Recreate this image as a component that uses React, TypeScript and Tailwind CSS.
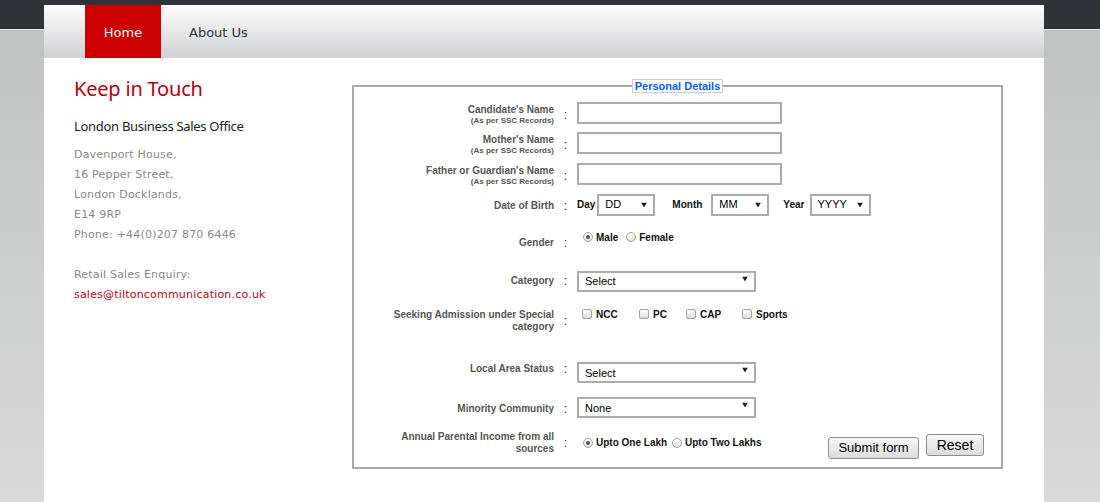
import React from 'react';

const arial = { fontFamily: '"Liberation Sans", Arial, sans-serif' };

const Radio: React.FC<{ checked?: boolean }> = ({ checked }) => (
  <span className="w-[10px] h-[10px] rounded-full border border-[#a3a3a3] bg-gradient-to-b from-[#ffffff] to-[#dedede] flex items-center justify-center shrink-0">
    {checked && <span className="w-[4px] h-[4px] rounded-full bg-[#555]"></span>}
  </span>
);

const Check: React.FC = () => (
  <span className="w-[10px] h-[10px] rounded-[2px] border border-[#a3a3a3] bg-gradient-to-b from-[#ffffff] to-[#dedede] shrink-0"></span>
);

const Select: React.FC<{ value: string; width: string; height?: string }> = ({ value, width, height = 'h-[22px]' }) => (
  <div className={`relative ${width} ${height}`}>
    <select
      defaultValue={value}
      className="appearance-none w-full h-full border-2 border-[#acacac] bg-white pl-[6px] text-[11px] font-normal text-black outline-none"
      style={arial}
    >
      <option>{value}</option>
    </select>
    <svg className="absolute right-[8px] top-1/2 -translate-y-1/2 pointer-events-none" width="6" height="5" viewBox="0 0 6 5">
      <path d="M0 0 H6 L3 5 Z" fill="#222" />
    </svg>
  </div>
);

// shift = a top-[Npx] class nudging the label and colon to sit where the original table cell puts them
const Row: React.FC<{ label: string; sub?: string; label2?: string; h: string; shift: string; children?: React.ReactNode }> = ({ label, sub, label2, h, shift, children }) => (
  <div className={`flex items-center ${h}`}>
    <div className={`relative ${shift} flex items-center shrink-0`}>
      <div className="w-[200px] text-right">
        <div className="text-[10px] font-bold text-[#555] leading-[12px]">{label}</div>
        {label2 && <div className="text-[10px] font-bold text-[#555] leading-[12px]">{label2}</div>}
        {sub && <div className="text-[8px] font-bold text-[#555] leading-[10px]">{sub}</div>}
      </div>
      <div className="w-[23px] text-center text-[12px] text-[#222]">:</div>
    </div>
    {children}
  </div>
);

const TextBox: React.FC = () => (
  <input type="text" className="w-[205px] h-[22px] border-2 border-[#acacac] bg-white outline-none" />
);

export default function App() {
  return (
    <div
      className="min-h-[502px] bg-[linear-gradient(to_bottom,#2f3337_0px,#2f3337_29px,#e8e8e8_29px,#e8e8e8_30px,#c1c3c3_30px,#d9d9d9_100%)]"
      style={arial}
    >
      <div className="ml-[44px] w-[1000px] pt-[5px]">
        {/* nav */}
        <nav className="h-[53px] flex bg-gradient-to-b from-[#fdfdfd] to-[#d0d1d3]" style={{ fontFamily: '"DejaVu Sans", Verdana, sans-serif' }}>
          <a className="ml-[41px] w-[76px] pt-[2px] bg-[#cc0000] text-white text-[13px] flex items-center justify-center">Home</a>
          <a className="ml-[28px] pt-[2px] text-[#2d3540] text-[13px] flex items-center">About Us</a>
        </nav>

        <div className="h-[444px] bg-white flex">
          {/* contact column */}
          <div className="w-[308px] pl-[30px] pt-[18px] shrink-0">
            <h2 className="text-[20px] leading-[26px] text-[#b5000f] tracking-[-0.2px]" style={{ fontFamily: '"Noto Sans", "Open Sans", sans-serif' }}>
              Keep in Touch
            </h2>
            <p className="mt-[14px] text-[13px] leading-[20px] text-[#222] tracking-[-0.3px]" style={{ fontFamily: '"Noto Sans", "Open Sans", sans-serif' }}>
              London Business Sales Office
            </p>
            <div className="mt-[9px] text-[11px] leading-[20px] text-[#888] tracking-[0.2px]" style={{ fontFamily: '"DejaVu Sans", Verdana, sans-serif' }}>
              <div>Davenport House,</div>
              <div>16 Pepper Street,</div>
              <div>London Docklands,</div>
              <div>E14 9RP</div>
              <div>Phone: +44(0)207 870 6446</div>
              <div className="h-[20px]"></div>
              <div>Retail Sales Enquiry:</div>
              <div className="text-[#c00010]">sales@tiltoncommunication.co.uk</div>
            </div>
          </div>

          {/* form */}
          <fieldset className="mt-[21px] w-[651px] h-[390px] border-2 border-[#a8a8a8] pt-[4px] self-start">
            <legend className="mx-auto px-[2px] border border-[#cfcfcf] text-[11px] leading-[12px] font-bold text-[#0b5cff]">
              Personal Details
            </legend>

            <Row label="Candidate's Name" sub="(As per SSC Records)" h="h-[31px]" shift="top-[2px]">
              <TextBox />
            </Row>
            <Row label="Mother's Name" sub="(As per SSC Records)" h="h-[30px]" shift="top-[2px]">
              <TextBox />
            </Row>
            <Row label="Father or Guardian's Name" sub="(As per SSC Records)" h="h-[31px]" shift="top-[2px]">
              <TextBox />
            </Row>
            <Row label="Date of Birth" h="h-[31px]" shift="top-[1px]">
              <div className="flex items-center text-[10px] font-bold text-[#111]">
                <span>Day</span>
                <div className="ml-[2px]"><Select value="DD" width="w-[58px]" /></div>
                <span className="ml-[17px]">Month</span>
                <div className="ml-[9px]"><Select value="MM" width="w-[58px]" /></div>
                <span className="ml-[14px]">Year</span>
                <div className="ml-[5px]"><Select value="YYYY" width="w-[61px]" /></div>
              </div>
            </Row>
            <Row label="Gender" h="h-[38px]" shift="top-[4px]">
              <div className="flex items-center mb-[4px] text-[10px] font-bold text-[#111]">
                <span className="ml-[6px]"><Radio checked /></span>
                <span className="ml-[3px]">Male</span>
                <span className="ml-[8px]"><Radio /></span>
                <span className="ml-[3px]">Female</span>
              </div>
            </Row>
            <Row label="Category" h="h-[41px]" shift="top-[2px]">
              <Select value="Select" width="w-[179px]" height="h-[21px]" />
            </Row>
            <Row label="Seeking Admission under Special" label2="category" h="h-[38px]" shift="top-[3px]">
              <div className="flex items-center mb-[8px] ml-[5px] text-[10px] font-bold text-[#111]">
                <div className="w-[57px] flex items-center gap-[4px]"><Check /><span>NCC</span></div>
                <div className="w-[47px] flex items-center gap-[4px]"><Check /><span>PC</span></div>
                <div className="w-[56px] flex items-center gap-[4px]"><Check /><span>CAP</span></div>
                <div className="flex items-center gap-[4px]"><Check /><span>Sports</span></div>
              </div>
            </Row>
            <Row label="Local Area Status" h="h-[58px]" shift="top-[3px]">
              <div className="mt-[8px]">
                <Select value="Select" width="w-[179px]" height="h-[21px]" />
              </div>
            </Row>
            <Row label="Minority Community" h="h-[20px]" shift="top-[4px]">
              <Select value="None" width="w-[179px]" height="h-[21px]" />
            </Row>
            <Row label="Annual Parental Income from all" label2="sources" h="h-[49px]" shift="top-[3px]">
              <div className="flex items-center mt-[6px] ml-[6px] text-[10px] font-bold text-[#111]">
                <div className="w-[89px] flex items-center gap-[3px]"><Radio checked /><span>Upto One Lakh</span></div>
                <div className="flex items-center gap-[3px]"><Radio /><span>Upto Two Lakhs</span></div>
              </div>
              <div className="ml-auto mr-[17px] flex items-start gap-[7px]">
                <button className="mt-[16px] w-[91px] h-[22px] border border-[#8e8e8e] rounded-[3px] bg-gradient-to-b from-[#f7f7f7] to-[#dcdcdc] text-[13px] text-black leading-none">
                  Submit form
                </button>
                <button className="mt-[13px] w-[58px] h-[22px] border border-[#8e8e8e] rounded-[3px] bg-gradient-to-b from-[#f7f7f7] to-[#dcdcdc] text-[14px] text-black leading-none">
                  Reset
                </button>
              </div>
            </Row>
          </fieldset>
        </div>
      </div>
    </div>
  );
}
